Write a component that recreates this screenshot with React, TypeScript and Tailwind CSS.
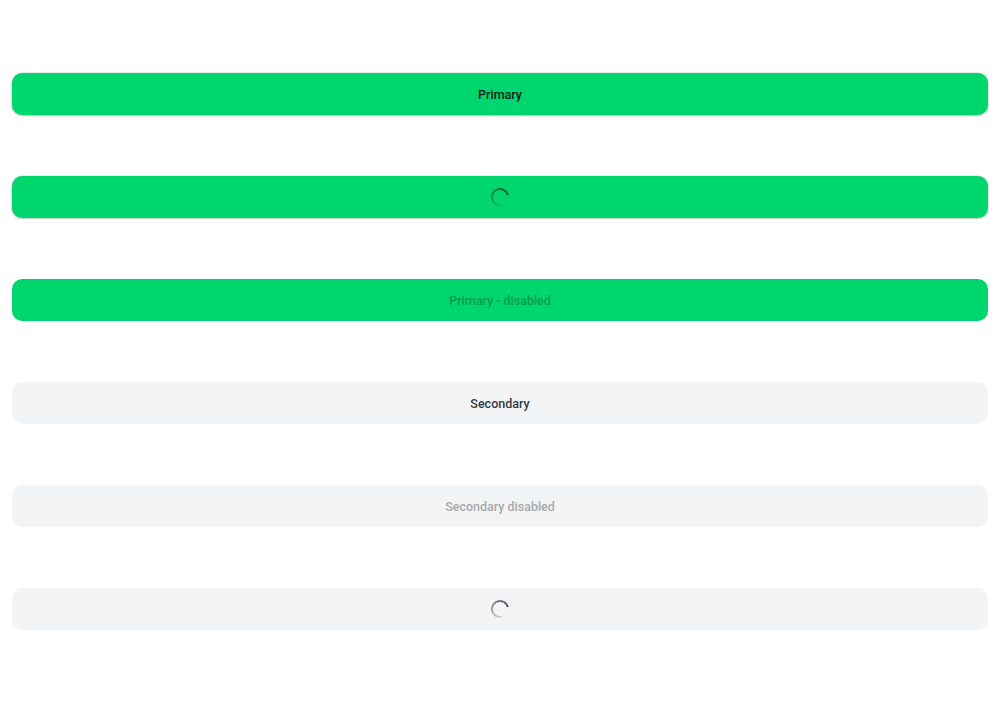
const font = { fontFamily: "Roboto, 'Liberation Sans', sans-serif" };

function Spinner({ color }: { color: string }) {
  // arc drawn as short segments fading from the head (near 3 o'clock) counter-clockwise
  const cx = 10;
  const cy = 10;
  const r = 8;
  const start = 15;
  const end = 285;
  const steps = 27;
  const segs = [];
  for (let i = 0; i < steps; i++) {
    const a0 = ((start + ((end - start) * i) / steps) * Math.PI) / 180;
    const a1 = ((start + ((end - start) * (i + 1)) / steps) * Math.PI) / 180;
    const x0 = cx + r * Math.cos(a0);
    const y0 = cy - r * Math.sin(a0);
    const x1 = cx + r * Math.cos(a1);
    const y1 = cy - r * Math.sin(a1);
    segs.push(
      <path
        key={i}
        d={`M${x0} ${y0} A${r} ${r} 0 0 0 ${x1} ${y1}`}
        stroke={color}
        strokeOpacity={0.9 - (0.8 * i) / steps}
        strokeWidth={1.8}
        fill="none"
      />
    );
  }
  return (
    <svg width="20" height="20" viewBox="0 0 20 20">
      {segs}
    </svg>
  );
}

export default function App() {
  const base =
    "w-full h-[42px] rounded-[10px] flex items-center justify-center text-[12.5px] font-medium";
  const primary = "bg-[#00d66e] shadow-[0_0_0_1px_rgba(0,0,0,0.07),0_1px_2px_rgba(0,0,0,0.18)]";
  return (
    <div className="min-h-[703px] bg-white px-3 pt-[73px] flex flex-col gap-[61px]" style={font}>
      <button className={`${base} ${primary} pt-[3px] text-[#0f1a14]`}>Primary</button>
      <button className={`${base} ${primary}`}>
        <Spinner color="#06281a" />
      </button>
      <button className={`${base} bg-[#00d66e] pt-[3px] text-[#0a9a50]`} disabled>
        Primary - disabled
      </button>
      <button className={`${base} bg-[#f3f4f6] pt-[3px] text-[#353841]`}>Secondary</button>
      <button className={`${base} bg-[#f3f4f6] pt-[3px] text-[#a8a8ab]`} disabled>
        Secondary disabled
      </button>
      <button className={`${base} bg-[#f3f4f6]`}>
        <Spinner color="#1f2025" />
      </button>
    </div>
  );
}
